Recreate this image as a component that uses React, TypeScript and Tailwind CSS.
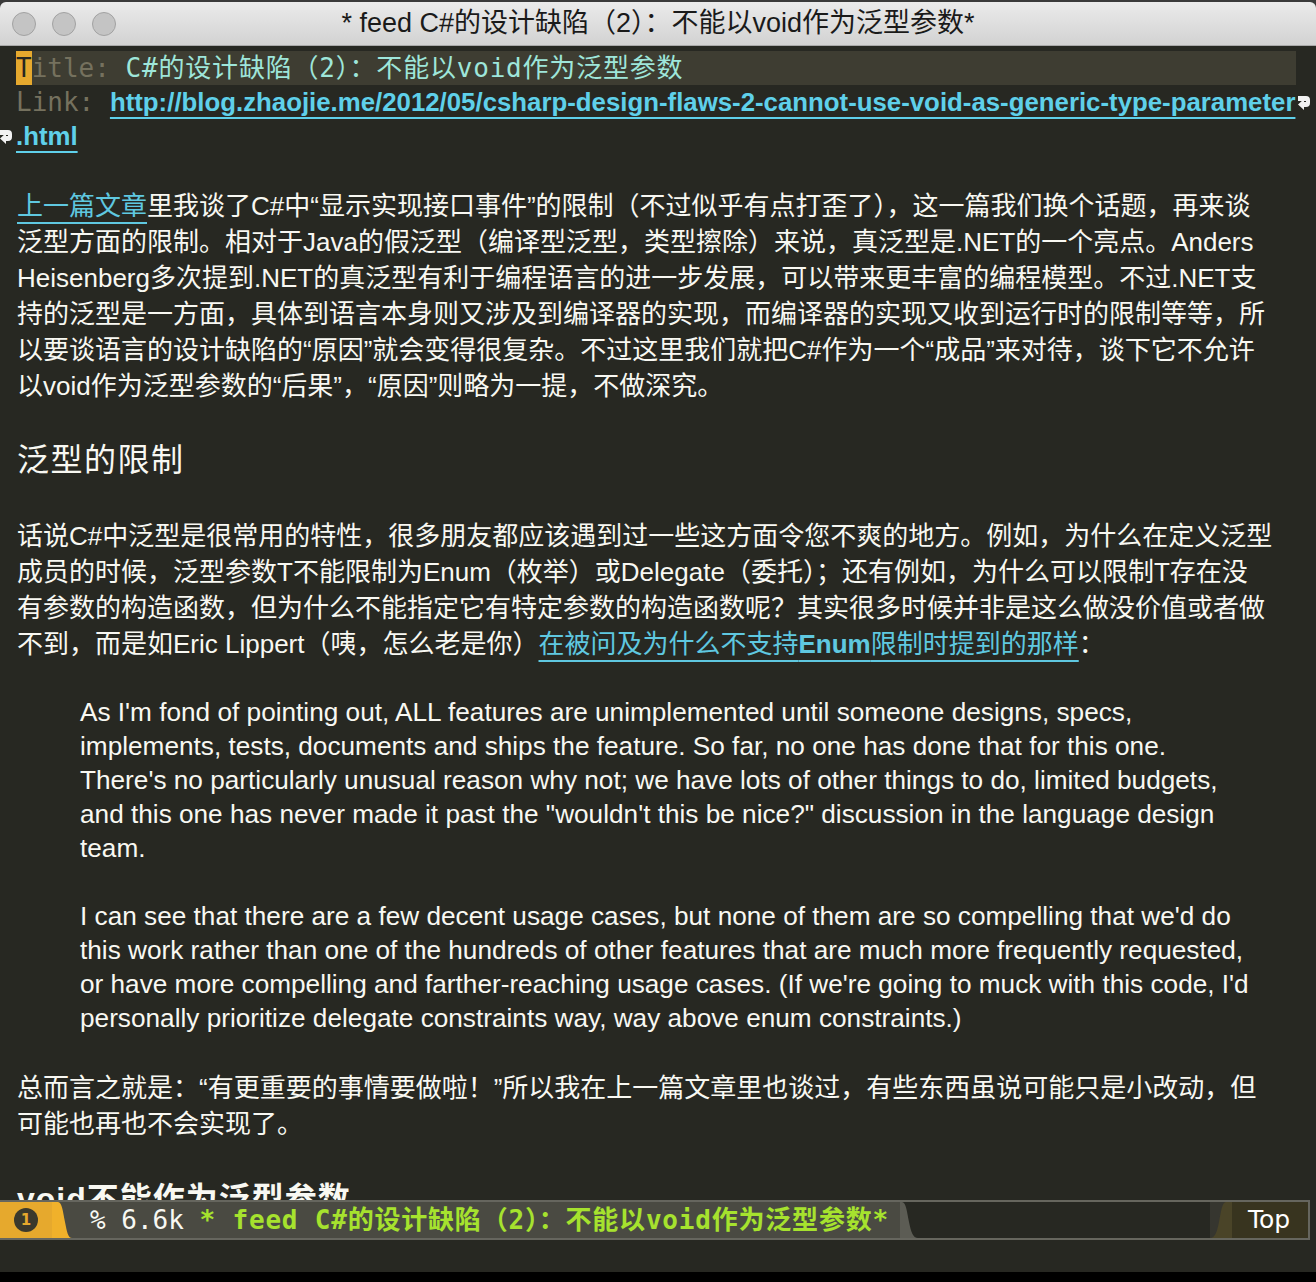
import React from "react";

const para1 = [
  "里我谈了C#中“显示实现接口事件”的限制（不过似乎有点打歪了），这一篇我们换个话题，再来谈",
  "泛型方面的限制。相对于Java的假泛型（编译型泛型，类型擦除）来说，真泛型是.NET的一个亮点。Anders",
  "Heisenberg多次提到.NET的真泛型有利于编程语言的进一步发展，可以带来更丰富的编程模型。不过.NET支",
  "持的泛型是一方面，具体到语言本身则又涉及到编译器的实现，而编译器的实现又收到运行时的限制等等，所",
  "以要谈语言的设计缺陷的“原因”就会变得很复杂。不过这里我们就把C#作为一个“成品”来对待，谈下它不允许",
  "以void作为泛型参数的“后果”，“原因”则略为一提，不做深究。",
];

const para2 = [
  "话说C#中泛型是很常用的特性，很多朋友都应该遇到过一些这方面令您不爽的地方。例如，为什么在定义泛型",
  "成员的时候，泛型参数T不能限制为Enum（枚举）或Delegate（委托）；还有例如，为什么可以限制T存在没",
  "有参数的构造函数，但为什么不能指定它有特定参数的构造函数呢？其实很多时候并非是这么做没价值或者做",
];

const quote1 = [
  "As I'm fond of pointing out, ALL features are unimplemented until someone designs, specs,",
  "implements, tests, documents and ships the feature. So far, no one has done that for this one.",
  "There's no particularly unusual reason why not; we have lots of other things to do, limited budgets,",
  "and this one has never made it past the \"wouldn't this be nice?\" discussion in the language design",
  "team.",
];

const quote2 = [
  "I can see that there are a few decent usage cases, but none of them are so compelling that we'd do",
  "this work rather than one of the hundreds of other features that are much more frequently requested,",
  "or have more compelling and farther-reaching usage cases. (If we're going to muck with this code, I'd",
  "personally prioritize delegate constraints way, way above enum constraints.)",
];

const mono = "font-['DejaVu_Sans_Mono','Noto_Sans_CJK_SC',monospace]";
const sans = "font-['Liberation_Sans','Noto_Sans_CJK_SC',sans-serif]";

function FringeArrow() {
  return (
    <svg width="12" height="15" viewBox="0 0 12 15" className="block">
      <path d="M0 1h8a4 4 0 0 1 4 4v3a4 4 0 0 1-4 4H6v3L0 9.5 6 4v3h2V6H0z" fill="#f2f2f2" />
    </svg>
  );
}

function TitleBar() {
  return (
    <div className="h-[46px] bg-[#3a3a3a] pt-[2px]">
      <div className="h-[44px] rounded-t-[6px] bg-gradient-to-b from-[#ebebeb] to-[#d2d2d2] border-b border-[#a9a9a9] flex items-center">
        <div className="flex items-center gap-[16px] pl-[12px]">
          <span className="w-[24px] h-[24px] rounded-full bg-[#c4c4c4] border border-[#a2a2a2]" />
          <span className="w-[24px] h-[24px] rounded-full bg-[#c4c4c4] border border-[#a2a2a2]" />
          <span className="w-[24px] h-[24px] rounded-full bg-[#c4c4c4] border border-[#a2a2a2]" />
        </div>
        <div className={`flex-1 text-center pr-[116px] text-[27px] text-[#1a1a1a] ${sans}`}>
          * feed C#的设计缺陷（2）：不能以void作为泛型参数*
        </div>
      </div>
    </div>
  );
}

function Buffer() {
  return (
    <div className="h-[1154px] overflow-hidden pt-[5px] text-[#f8f8f2]">
      {/* header lines */}
      <div className="flex h-[34px]">
        <div className="w-[16px]" />
        <div className={`w-[1280px] bg-[#3e3d32] flex items-center text-[26px] whitespace-pre ${mono}`}>
          <span className="bg-[#e6a92e] text-[#272822] leading-[34px]">T</span>
          <span className="text-[#75715e]">itle: </span>
          <span className="text-[#9ee6da] tracking-[0.8px]">C#的设计缺陷（2）：不能以void作为泛型参数</span>
        </div>
      </div>
      <div className="flex h-[34px] items-center">
        <div className="w-[16px]" />
        <div className="w-[1282px] flex items-center whitespace-pre">
          <span className={`text-[26px] text-[#75715e] ${mono}`}>Link: </span>
          <span className={`text-[25.8px] font-bold text-[#5fd0ea] underline decoration-2 underline-offset-[6px] ${sans}`}>
            http://blog.zhaojie.me/2012/05/csharp-design-flaws-2-cannot-use-void-as-generic-type-parameter
          </span>
        </div>
        <FringeArrow />
      </div>
      <div className="flex h-[34px] items-center">
        <div className="w-[16px] flex justify-start">
          <FringeArrow />
        </div>
        <span className={`text-[25.8px] font-bold text-[#5fd0ea] underline decoration-2 underline-offset-[6px] ${sans}`}>.html</span>
      </div>

      <div className={`pl-[17px] mt-[35px] text-[26px] whitespace-nowrap ${sans}`}>
        {para1.map((line, i) => (
          <div key={i} className="h-[36px] leading-[36px]">
            {i === 0 && (
              <span className="text-[#5fc8e0] underline decoration-2 underline-offset-[7px]">上一篇文章</span>
            )}
            {line}
          </div>
        ))}

        <div className="mt-[36px] h-[40px] leading-[40px] text-[32px] tracking-[1.5px]">泛型的限制</div>

        <div className="mt-[38px]">
          {para2.map((line, i) => (
            <div key={i} className="h-[36px] leading-[36px]">{line}</div>
          ))}
          <div className="h-[36px] leading-[36px]">
            不到，而是如Eric Lippert（咦，怎么老是你）
            <span className="text-[#5fc8e0] underline decoration-2 underline-offset-[7px]">
              在被问及为什么不支持<span className="font-bold">Enum</span>限制时提到的那样
            </span>
            ：
          </div>
        </div>

        <div className="mt-[33px] pl-[63px] text-[26.2px]">
          {quote1.map((line, i) => (
            <div key={i} className="h-[34px] leading-[34px]">{line}</div>
          ))}
          <div className="mt-[34px]">
            {quote2.map((line, i) => (
              <div key={i} className="h-[34px] leading-[34px]">{line}</div>
            ))}
          </div>
        </div>

        <div className="mt-[35px]">
          <div className="h-[36px] leading-[36px]">总而言之就是：“有更重要的事情要做啦！”所以我在上一篇文章里也谈过，有些东西虽说可能只是小改动，但</div>
          <div className="h-[36px] leading-[36px]">可能也再也不会实现了。</div>
        </div>

        <div className="mt-[37px] h-[40px] leading-[40px] text-[32px] font-bold tracking-[1px]">void不能作为泛型参数</div>
      </div>
    </div>
  );
}

function ModeLine() {
  return (
    <div className={`h-[40px] w-[1310px] flex border-y-2 border-r-2 border-[#66665e] text-[26px] whitespace-pre ${mono}`}>
      <div className="w-[52px] bg-[#e6a92d] flex items-center justify-center">
        <span className="w-[24px] h-[24px] rounded-full bg-[#3b392c] text-[#e6a92d] text-[15px] leading-none font-bold flex items-center justify-center font-['DejaVu_Sans',sans-serif]">
          1
        </span>
      </div>
      <svg width="20" height="36" viewBox="0 0 20 36" className="block shrink-0">
        <rect width="20" height="36" fill="#4a4a42" />
        <path d="M0 0H6C10 0 11 10 13 20C15 30 16 36 20 36H0Z" fill="#f0b12b" />
      </svg>
      <div className="w-[828px] bg-[#4a4a42] flex items-center pl-[18px]">
        <span className="text-[#f8f8f2]">% 6.6k </span>
        <span className="text-[#a6e22e] font-bold tracking-[0.8px]">* feed C#的设计缺陷（2）：不能以void作为泛型参数*</span>
      </div>
      <svg width="20" height="36" viewBox="0 0 20 36" className="block shrink-0">
        <rect width="20" height="36" fill="#272822" />
        <path d="M0 0H2C6 0 7 10 9 20C11 30 13 36 18 36H0Z" fill="#5c5c54" />
      </svg>
      <div className="flex-1 bg-[#272822]" />
      <svg width="22" height="36" viewBox="0 0 22 36" className="block shrink-0">
        <rect width="22" height="36" fill="#36362f" />
        <path d="M22 0H16C12 0 11 10 9 20C7 30 5 36 0 36H22Z" fill="#4a4428" />
      </svg>
      <div className="w-[76px] bg-[#38341f] flex items-center pl-[16px] text-[#ffffff] font-['DejaVu_Sans',sans-serif] text-[25px]">
        Top
      </div>
    </div>
  );
}

export default function App() {
  return (
    <div className="w-[1316px] h-[1282px] bg-[#272822] flex flex-col overflow-hidden">
      <TitleBar />
      <Buffer />
      <ModeLine />
      <div className="h-[32px] bg-[#272822]" />
      <div className="h-[10px] bg-black" />
    </div>
  );
}
